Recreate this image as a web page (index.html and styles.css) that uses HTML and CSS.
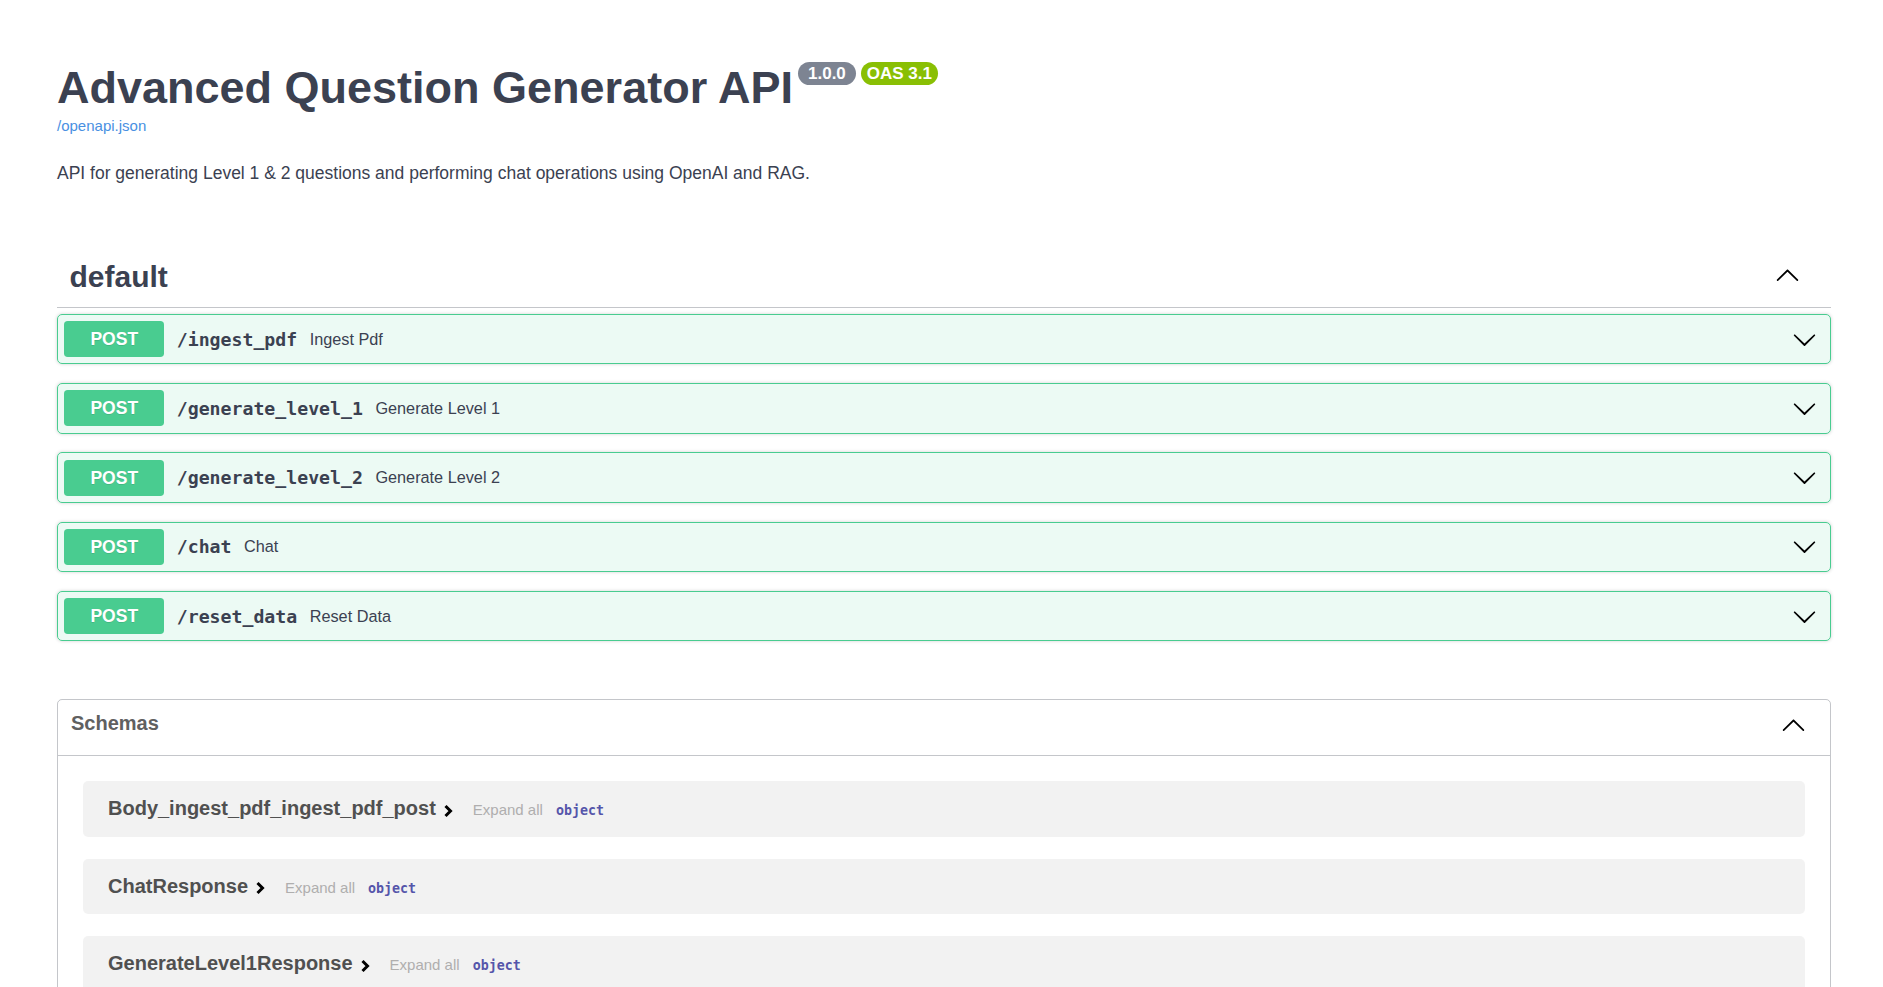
FILE: index.html
```html
<!DOCTYPE html>
<html lang="en">
<head>
<meta charset="utf-8">
<title>Advanced Question Generator API - Swagger UI</title>
<link rel="stylesheet" href="styles.css">
</head>
<body>
<div class="wrapper">
  <section class="info">
    <hgroup class="main">
      <h2 class="title"><span class="title-text">Advanced Question Generator API</span><span class="badge badge-version">1.0.0</span><span class="badge badge-oas">OAS 3.1</span></h2>
      <a class="link" href="#">/openapi.json</a>
    </hgroup>
    <p class="description">API for generating Level 1 &amp; 2 questions and performing chat operations using OpenAI and RAG.</p>
  </section>

  <section class="tag-section">
    <h3 class="tag">
      <span class="tag-name">default</span>
      <svg class="arrow tag-arrow" viewBox="0 0 20 20"><path d="M17.418 14.908c.272.268.709.268.979 0s.271-.701 0-.969l-7.908-7.83c-.27-.268-.707-.268-.979 0l-7.908 7.830c-.27.268-.27.701 0 .969.271.268.709.268.979 0L10 7.767l7.418 7.141z"/></svg>
    </h3>

    <div class="opblock">
      <span class="method">POST</span>
      <span class="path">/ingest_pdf</span>
      <span class="summary">Ingest Pdf</span>
      <svg class="arrow op-arrow" viewBox="0 0 20 20"><path d="M17.418 6.109c.272-.268.709-.268.979 0s.271.701 0 .969l-7.908 7.83c-.27.268-.707.268-.979 0l-7.908-7.83c-.27-.268-.27-.701 0-.969.271-.268.709-.268.979 0L10 13.25l7.418-7.141z"/></svg>
    </div>
    <div class="opblock">
      <span class="method">POST</span>
      <span class="path">/generate_level_1</span>
      <span class="summary">Generate Level 1</span>
      <svg class="arrow op-arrow" viewBox="0 0 20 20"><path d="M17.418 6.109c.272-.268.709-.268.979 0s.271.701 0 .969l-7.908 7.83c-.27.268-.707.268-.979 0l-7.908-7.83c-.27-.268-.27-.701 0-.969.271-.268.709-.268.979 0L10 13.25l7.418-7.141z"/></svg>
    </div>
    <div class="opblock">
      <span class="method">POST</span>
      <span class="path">/generate_level_2</span>
      <span class="summary">Generate Level 2</span>
      <svg class="arrow op-arrow" viewBox="0 0 20 20"><path d="M17.418 6.109c.272-.268.709-.268.979 0s.271.701 0 .969l-7.908 7.83c-.27.268-.707.268-.979 0l-7.908-7.83c-.27-.268-.27-.701 0-.969.271-.268.709-.268.979 0L10 13.25l7.418-7.141z"/></svg>
    </div>
    <div class="opblock">
      <span class="method">POST</span>
      <span class="path">/chat</span>
      <span class="summary">Chat</span>
      <svg class="arrow op-arrow" viewBox="0 0 20 20"><path d="M17.418 6.109c.272-.268.709-.268.979 0s.271.701 0 .969l-7.908 7.83c-.27.268-.707.268-.979 0l-7.908-7.83c-.27-.268-.27-.701 0-.969.271-.268.709-.268.979 0L10 13.25l7.418-7.141z"/></svg>
    </div>
    <div class="opblock">
      <span class="method">POST</span>
      <span class="path">/reset_data</span>
      <span class="summary">Reset Data</span>
      <svg class="arrow op-arrow" viewBox="0 0 20 20"><path d="M17.418 6.109c.272-.268.709-.268.979 0s.271.701 0 .969l-7.908 7.83c-.27.268-.707.268-.979 0l-7.908-7.83c-.27-.268-.27-.701 0-.969.271-.268.709-.268.979 0L10 13.25l7.418-7.141z"/></svg>
    </div>
  </section>

  <section class="models">
    <h4 class="models-head">
      <span class="models-title">Schemas</span>
      <svg class="arrow models-arrow" viewBox="0 0 20 20"><path d="M17.418 14.908c.272.268.709.268.979 0s.271-.701 0-.969l-7.908-7.83c-.27-.268-.707-.268-.979 0l-7.908 7.83c-.27.268-.27.701 0 .969.271.268.709.268.979 0L10 7.767l7.418 7.141z"/></svg>
    </h4>
    <div class="model-list">
      <div class="model-container">
        <span class="model-btn"><span class="model-title">Body_ingest_pdf_ingest_pdf_post</span><svg class="chev" viewBox="0 0 10 14"><polyline points="2.5,2 7.5,7 2.5,12"/></svg></span>
        <span class="expand">Expand all</span>
        <span class="type">object</span>
      </div>
      <div class="model-container">
        <span class="model-btn"><span class="model-title">ChatResponse</span><svg class="chev" viewBox="0 0 10 14"><polyline points="2.5,2 7.5,7 2.5,12"/></svg></span>
        <span class="expand">Expand all</span>
        <span class="type">object</span>
      </div>
      <div class="model-container">
        <span class="model-btn"><span class="model-title">GenerateLevel1Response</span><svg class="chev" viewBox="0 0 10 14"><polyline points="2.5,2 7.5,7 2.5,12"/></svg></span>
        <span class="expand">Expand all</span>
        <span class="type">object</span>
      </div>
    </div>
  </section>
</div>
</body>
</html>
```

FILE: styles.css
```css
html, body {
  margin: 0;
  padding: 0;
  background: #fff;
}

body {
  font-family: "Liberation Sans", Arial, sans-serif;
  color: #3b4151;
}

.wrapper {
  padding: 0 52px 0 57px;
}

/* ---------- info ---------- */
.info {
  margin: 62px 0 0;
}

.main {
  margin: 0;
}

.title {
  display: flex;
  align-items: flex-start;
  margin: 0;
  font-size: 45px;
  line-height: 52px;
  font-weight: 700;
  color: #3b4151;
}

.badge {
  margin: 0 0 0 5px;
  padding: 0 10px;
  height: 23px;
  line-height: 23px;
  border-radius: 60px;
  font-size: 17px;
  font-weight: 700;
  color: #fff;
  background: #7d8492;
}

.badge-oas {
  background: #89bf04;
  padding: 0 6px;
}

.link {
  display: block;
  margin-top: 3px;
  font-size: 15px;
  line-height: 17px;
  color: #4990e2;
  text-decoration: none;
}

.description {
  margin: 29px 0 0;
  font-size: 17.5px;
  line-height: 20px;
  color: #3b4151;
}

/* ---------- tag section ---------- */
.tag-section {
  display: flex;
  flex-direction: column;
  margin-top: 64px;
}

.tag {
  display: flex;
  align-items: center;
  margin: 0 0 6.25px;
  padding: 12.5px 31px 12.5px 12.5px;
  border-bottom: 1px solid rgba(59, 65, 81, 0.3);
  font-size: 30px;
  line-height: 34.5px;
  font-weight: 700;
  color: #3b4151;
}

.tag-name {
  flex: 1 1 auto;
}

.arrow {
  display: block;
  width: 25px;
  height: 25px;
  fill: #000;
  flex: 0 0 auto;
}

.tag-arrow {
  margin-bottom: 5px;
}

.opblock {
  display: flex;
  align-items: center;
  margin: 0 0 18.75px;
  padding: 6.25px;
  border: 1px solid #49cc90;
  border-radius: 5px;
  background: rgba(73, 204, 144, 0.1);
  box-shadow: 0 0 3.75px rgba(0, 0, 0, 0.19);
}

.method {
  min-width: 100px;
  height: 36px;
  line-height: 36px;
  border-radius: 3.75px;
  background: #49cc90;
  color: #fff;
  font-size: 17.5px;
  font-weight: 700;
  text-align: center;
  text-shadow: 0 1.25px 0 rgba(0, 0, 0, 0.1);
}

.path {
  padding: 0 12.5px;
  font-family: "DejaVu Sans Mono", "Liberation Mono", monospace;
  font-size: 18.2px;
  font-weight: 700;
  color: #3b4151;
}

.summary {
  flex: 1 1 auto;
  font-size: 16.25px;
  color: #3b4151;
}

.op-arrow {
  margin-right: 7px;
}

/* ---------- models ---------- */
.models {
  margin: 39px 0 0;
  border: 1px solid rgba(59, 65, 81, 0.3);
  border-radius: 5px;
}

.models-head {
  display: flex;
  align-items: center;
  box-sizing: border-box;
  height: 56px;
  margin: 0 0 6.25px;
  padding: 0 24px 0 13px;
  border-bottom: 1px solid rgba(59, 65, 81, 0.3);
  font-size: 20px;
  font-weight: 700;
  color: #606060;
}

.models-title {
  flex: 1 1 auto;
  margin-bottom: 8px;
}

.models-arrow {
  margin-bottom: 6px;
}

.model-list {
  display: flex;
  flex-direction: column;
  padding-top: 18.75px;
}

.model-container {
  display: flex;
  align-items: baseline;
  box-sizing: border-box;
  height: 55.5px;
  margin: 0 25px 22px;
  padding: 16.25px 25px 0;
  border-radius: 5px;
  background: rgba(0, 0, 0, 0.05);
}

.model-btn {
  display: inline-flex;
  align-items: center;
}

.model-title {
  font-size: 20px;
  line-height: 23px;
  font-weight: 700;
  color: #505050;
}

.chev {
  width: 10px;
  height: 14px;
  margin: 4px 0 0 7px;
  fill: none;
  stroke: #000;
  stroke-width: 3;
}

.expand {
  margin-left: 20px;
  font-size: 15px;
  color: #afaeae;
}

.type {
  margin-left: 13px;
  font-family: "DejaVu Sans Mono", "Liberation Mono", monospace;
  font-size: 13.3px;
  font-weight: 700;
  color: #55a;
}
```
